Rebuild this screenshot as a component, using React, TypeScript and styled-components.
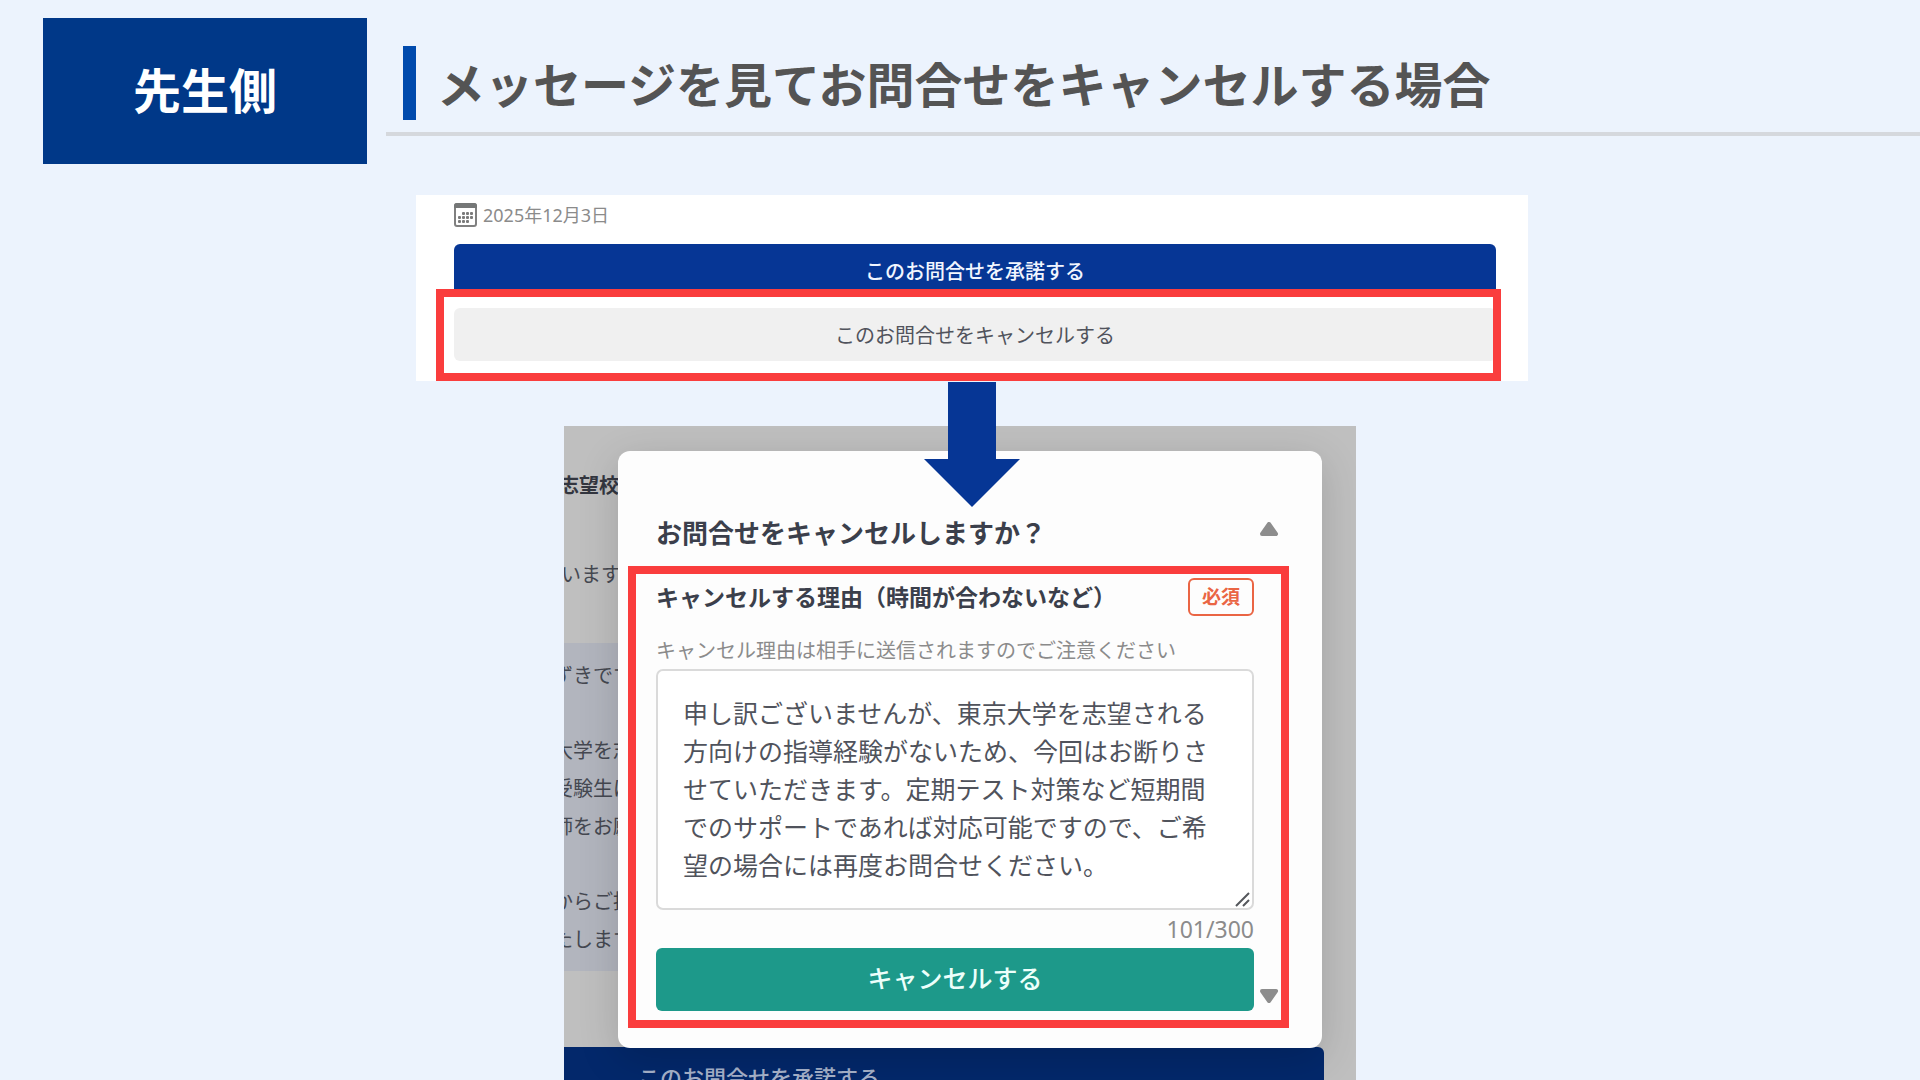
import React, { useState } from "react";
import styled, { createGlobalStyle, css } from "styled-components";

const color = {
  page: "#ecf3fd",
  navy: "#003888",
  accent: "#004aad",
  primary: "#063695",
  highlight: "#fa3d3d",
  heading: "#545454",
  ink: "#3b3f4b",
  body: "#50535c",
  muted: "#8b8b8b",
  required: "#ea6544",
  teal: "#1d998a",
};

const GlobalStyle = createGlobalStyle`
  *, *::before, *::after { box-sizing: border-box; }
  body {
    margin: 0;
    background: ${color.page};
    font-family: "Noto Sans", "Noto Sans CJK JP", sans-serif;
    color: ${color.body};
  }
  h1, h2, p { margin: 0; }
  button, textarea { font-family: inherit; }
`;

const highlightBox = css`
  content: "";
  position: absolute;
  border: 8px solid ${color.highlight};
  pointer-events: none;
`;

const Slide = styled.div`
  display: flex;
  flex-direction: column;
  min-height: 100vh;
  overflow: hidden;
`;

const Header = styled.header`
  display: flex;
  align-items: flex-start;
  gap: 19px;
  padding: 18px 0 0 43px;
`;

const RoleBadge = styled.div`
  display: flex;
  align-items: center;
  justify-content: center;
  flex: none;
  width: 324px;
  height: 146px;
  background: ${color.navy};
  color: #fff;
  font-size: 48px;
  font-weight: 700;
  line-height: 72px;
`;

const TitleBar = styled.div`
  display: flex;
  flex: 1;
  gap: 21px;
  padding: 28px 0 12px 17px;
  border-bottom: 4px solid #d5d8dd;
`;

const TitleMark = styled.span`
  flex: none;
  width: 13px;
  background: ${color.accent};
`;

const Title = styled.h1`
  padding-top: 4px;
  color: ${color.heading};
  font-size: 48px;
  font-weight: 700;
  line-height: 70px;
`;

const Figures = styled.main`
  display: flex;
  flex: 1;
  flex-direction: column;
  align-items: center;
  gap: 45px;
  padding-top: 31px;
`;

const RequestCard = styled.section`
  position: relative;
  z-index: 1;
  display: flex;
  flex-direction: column;
  width: 100%;
  max-width: 1112px;
  margin-left: 24px;
  padding: 8px 32px 20px 38px;
  background: #fff;
`;

const DateRow = styled.div`
  display: flex;
  align-items: center;
  gap: 5px;
  height: 24px;
  margin-bottom: 17px;
  color: ${color.muted};
  font-size: 18px;
  line-height: 26px;
`;

const WideButton = styled.button<{ $tone: "primary" | "plain" }>`
  display: block;
  width: 100%;
  height: 53px;
  padding: 2px 0 0;
  border: 0;
  border-radius: 6px;
  background: ${(p) => (p.$tone === "primary" ? color.primary : "#f0f0f0")};
  color: ${(p) => (p.$tone === "primary" ? "#f2f6ff" : color.body)};
  font-size: 20px;
  font-weight: ${(p) => (p.$tone === "primary" ? 500 : 400)};
  line-height: 38px;
`;

const MarkedAction = styled.div`
  position: relative;
  margin-top: 11px;
  &::after {
    ${highlightBox}
    inset: -19px -5px -20px -18px;
  }
`;

const FlowArrow = styled.svg`
  position: absolute;
  top: 100%;
  left: 50%;
  margin-left: -48px;
  fill: ${color.primary};
`;

const Screen = styled.section`
  display: grid;
  grid-template-columns: minmax(0, 1fr);
  align-items: start;
  flex: 1 1 0;
  width: 100%;
  max-width: 792px;
  min-height: 654px;
  max-height: 654px;
  overflow: hidden;
  background: #bfbfbf;
`;

const Backdrop = styled.div`
  display: flex;
  flex-direction: column;
  grid-area: 1 / 1;
  padding: 41px 32px 0 0;
  color: #454851;
  font-size: 20px;
  line-height: 38px;
  white-space: nowrap;
`;

const BackdropHeading = styled.p`
  margin: 0 0 51px -5px;
  color: #33363f;
  font-weight: 600;
`;

const BackdropText = styled.p`
  margin: 0 0 49px -3px;
`;

const BackdropMessage = styled.div`
  display: flex;
  flex-direction: column;
  gap: 37px;
  margin: 0 2px 76px 0;
  padding: 14px 0 12px;
  background: #b2b5be;
  p { margin-left: -11px; }
`;

const BackdropButton = styled.button`
  height: 62px;
  margin-left: -370px;
  padding: 0 0 4px;
  border: 0;
  border-radius: 6px;
  background: #03286b;
  color: #a6b2ca;
  font-size: 22px;
  font-weight: 500;
`;

const Dialog = styled.div`
  position: relative;
  grid-area: 1 / 1;
  margin: 25px 34px 0 54px;
  padding: 63px 43px 37px 38px;
  border-radius: 12px;
  background: #fdfdfd;
  box-shadow: 0 10px 40px rgba(0, 0, 0, 0.16);
`;

const ScrollArea = styled.div`
  position: relative;
  display: flex;
  gap: 5px;
  &::after {
    ${highlightBox}
    inset: 52px -10px -17px -28px;
  }
`;

const Form = styled.form`
  display: flex;
  flex: 1;
  flex-direction: column;
  min-width: 0;
`;

const DialogTitle = styled.h2`
  margin-bottom: 26px;
  color: ${color.ink};
  font-size: 26px;
  font-weight: 600;
  line-height: 38px;
`;

const LabelRow = styled.div`
  display: flex;
  align-items: center;
  justify-content: space-between;
  margin-bottom: 17px;
`;

const Label = styled.label`
  color: ${color.ink};
  font-size: 23px;
  font-weight: 600;
  line-height: 38px;
`;

const Required = styled.span`
  padding: 0 12px;
  border: 2px solid ${color.required};
  border-radius: 6px;
  color: ${color.required};
  font-size: 19px;
  font-weight: 600;
  line-height: 34px;
`;

const Hint = styled.p`
  color: ${color.muted};
  font-size: 20px;
  line-height: 36px;
`;

const Field = styled.div`
  position: relative;
  display: flex;
`;

const Reason = styled.textarea`
  width: 100%;
  height: 241px;
  padding: 23px 24px 23px 25px;
  border: 2px solid #dadada;
  border-radius: 7px;
  outline: 0;
  overflow: hidden;
  resize: none;
  background: #fff;
  color: ${color.body};
  font-size: 25px;
  line-height: 38px;
`;

const Grip = styled.svg`
  position: absolute;
  right: 3px;
  bottom: 2px;
  stroke: #55575c;
  stroke-width: 2;
  pointer-events: none;
`;

const Counter = styled.p`
  color: ${color.muted};
  font-size: 23px;
  line-height: 38px;
  text-align: right;
`;

const Submit = styled.button`
  height: 63px;
  padding: 0 0 4px;
  border: 0;
  border-radius: 6px;
  background: ${color.teal};
  color: #ecfffb;
  font-size: 25px;
  font-weight: 500;
  line-height: 38px;
`;

const ScrollRail = styled.div`
  display: flex;
  flex: none;
  flex-direction: column;
  justify-content: space-between;
  padding: 8px 0;
`;

const ScrollButton = styled.button`
  display: block;
  padding: 0;
  border: 0;
  background: none;
  svg {
    display: block;
    fill: #8d8d8d;
    stroke: #8d8d8d;
    stroke-width: 4;
    stroke-linejoin: round;
  }
`;

const CALENDAR_DOTS = [
  [9, 11], [13, 11], [17, 11],
  [5, 15], [9, 15], [13, 15], [17, 15],
  [5, 19], [9, 19], [13, 19],
];

function CalendarIcon() {
  return (
    <svg width="24" height="24" viewBox="0 0 24 24" aria-hidden="true">
      <rect x="1" y="1" width="21" height="22" rx="2" fill="none" stroke="#808080" strokeWidth="2" />
      <path d="M0 3a3 3 0 0 1 3-3h17a3 3 0 0 1 3 3v2H0z" fill="#757777" />
      {CALENDAR_DOTS.map(([x, y]) => (
        <rect key={`${x}-${y}`} x={x - 1} y={y - 2} width="3" height="3" rx="1" fill="#7a7a7a" />
      ))}
    </svg>
  );
}

const INITIAL_REASON =
  "申し訳ございませんが、東京大学を志望される方向けの指導経験がないため、今回はお断りさせていただきます。定期テスト対策など短期間でのサポートであれば対応可能ですので、ご希望の場合には再度お問合せください。";

export default function App() {
  const [reason, setReason] = useState(INITIAL_REASON);

  return (
    <Slide>
      <GlobalStyle />
      <Header>
        <RoleBadge>先生側</RoleBadge>
        <TitleBar>
          <TitleMark />
          <Title>メッセージを見てお問合せをキャンセルする場合</Title>
        </TitleBar>
      </Header>

      <Figures>
        <RequestCard>
          <DateRow>
            <CalendarIcon />
            <time dateTime="2025-12-03">2025年12月3日</time>
          </DateRow>
          <WideButton type="button" $tone="primary">このお問合せを承諾する</WideButton>
          <MarkedAction>
            <WideButton type="button" $tone="plain">このお問合せをキャンセルする</WideButton>
          </MarkedAction>
          <FlowArrow width="96" height="126" viewBox="0 0 96 126" aria-hidden="true">
            <path d="M24 1h48v77h24L48 126 0 78h24z" />
          </FlowArrow>
        </RequestCard>

        <Screen>
          <Backdrop>
            <BackdropHeading>志望校</BackdropHeading>
            <BackdropText>います</BackdropText>
            <BackdropMessage>
              <p>ずきです</p>
              <p>
                大学を志<br />受験生は<br />師をお願
              </p>
              <p>
                からご指<br />たします
              </p>
            </BackdropMessage>
            <BackdropButton type="button">このお問合せを承諾する</BackdropButton>
          </Backdrop>

          <Dialog role="dialog" aria-labelledby="dialog-title">
            <ScrollArea>
              <Form onSubmit={(e) => e.preventDefault()}>
                <DialogTitle id="dialog-title">お問合せをキャンセルしますか？</DialogTitle>
                <LabelRow>
                  <Label htmlFor="reason">キャンセルする理由（時間が合わないなど）</Label>
                  <Required>必須</Required>
                </LabelRow>
                <Hint id="reason-hint">キャンセル理由は相手に送信されますのでご注意ください</Hint>
                <Field>
                  <Reason
                    id="reason"
                    aria-describedby="reason-hint"
                    maxLength={300}
                    spellCheck={false}
                    value={reason}
                    onChange={(e) => setReason(e.target.value)}
                  />
                  <Grip width="16" height="16" viewBox="0 0 16 16" aria-hidden="true">
                    <path d="M1 14L14 1M8 14l6-6" />
                  </Grip>
                </Field>
                <Counter>{reason.length}/300</Counter>
                <Submit type="submit">キャンセルする</Submit>
              </Form>
              <ScrollRail>
                <ScrollButton type="button" aria-label="上へスクロール">
                  <svg width="20" height="14" viewBox="0 0 20 14"><path d="M10 2L17 12H3z" /></svg>
                </ScrollButton>
                <ScrollButton type="button" aria-label="下へスクロール">
                  <svg width="20" height="14" viewBox="0 0 20 14"><path d="M10 12L17 2H3z" /></svg>
                </ScrollButton>
              </ScrollRail>
            </ScrollArea>
          </Dialog>
        </Screen>
      </Figures>
    </Slide>
  );
}
